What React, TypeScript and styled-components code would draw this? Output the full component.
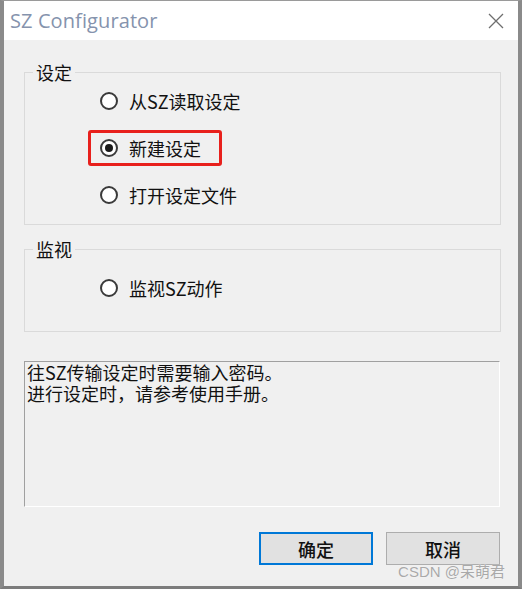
import React from "react";
import styled, { createGlobalStyle } from "styled-components";

const GlobalStyle = createGlobalStyle`
  html, body {
    margin: 0;
    padding: 0;
    background: #8a8a8a;
  }
  body {
    font-family: "Noto Sans CJK SC", "Noto Sans", sans-serif;
  }
`;

const Window = styled.div`
  position: relative;
  width: 522px;
  height: 589px;
  box-sizing: border-box;
  border-left: 4px solid #8a8a8a;
  border-right: 4px solid #8a8a8a;
  border-bottom: 3px solid #7c7c7c;
  border-top: 1px solid #9a9a9a;
  background: #f0f0f0;
  display: flex;
  flex-direction: column;
`;

const TitleBar = styled.div`
  height: 39px;
  background: #ffffff;
  display: flex;
  align-items: center;
  justify-content: space-between;
  padding: 0 14px 0 6px;
  flex-shrink: 0;
`;

const Title = styled.span`
  font-family: "Open Sans", "Noto Sans", sans-serif;
  font-size: 20px;
  color: #8593ad;
  letter-spacing: 0.1px;
`;

const CloseIcon = () => (
  <svg width="16" height="16" viewBox="0 0 16 16">
    <path d="M1 1 L15 15 M15 1 L1 15" stroke="#6e6e6e" strokeWidth="1.3" fill="none" />
  </svg>
);

const Client = styled.div`
  flex: 1;
  display: flex;
  flex-direction: column;
  padding: 22px 17px 0 20px;
`;

const Group = styled.fieldset<{ $pt: number; $pb: number; $mt?: number }>`
  margin: ${(p) => p.$mt ?? 0}px 0 0 0;
  padding: ${(p) => p.$pt}px 0 ${(p) => p.$pb}px 0;
  border: 1px solid #dadada;
  display: flex;
  flex-direction: column;
  gap: 11px;
  min-width: 0;
`;

const Legend = styled.legend`
  font-size: 18px;
  line-height: 20px;
  color: #111;
  margin-left: 8px;
  padding: 0 3px;
`;

const Row = styled.label<{ $marked?: boolean }>`
  align-self: flex-start;
  display: inline-flex;
  align-items: center;
  gap: 11px;
  height: 36px;
  box-sizing: border-box;
  margin-left: 63px;
  padding: 0 18px 0 9px;
  border: 3px solid ${(p) => (p.$marked ? "#e8201c" : "transparent")};
  border-radius: 3px;
  font-size: 18px;
  color: #111;
`;

const Circle = styled.span<{ $on?: boolean }>`
  width: 18px;
  height: 18px;
  box-sizing: border-box;
  border-radius: 50%;
  border: 2px solid #3a3a3a;
  background: #fff;
  display: flex;
  align-items: center;
  justify-content: center;
  &::after {
    content: "";
    width: 8px;
    height: 8px;
    border-radius: 50%;
    background: ${(p) => (p.$on ? "#1a1a1a" : "transparent")};
  }
`;

const Radio = ({ label, on, marked }: { label: string; on?: boolean; marked?: boolean }) => (
  <Row $marked={marked}>
    <Circle $on={on} />
    <span>{label}</span>
  </Row>
);

const InfoBox = styled.div`
  margin-top: 29px;
  margin-right: 1px;
  height: 146px;
  box-sizing: border-box;
  border-top: 1px solid #a0a0a0;
  border-left: 1px solid #a0a0a0;
  border-right: 1px solid #ffffff;
  border-bottom: 1px solid #ffffff;
  padding: 0 0 0 2px;
  font-size: 18px;
  line-height: 21px;
  color: #111;
`;

const ButtonRow = styled.div`
  margin-top: 25px;
  display: flex;
  justify-content: flex-end;
  gap: 13px;
  padding-right: 1px;
`;

const Button = styled.button<{ $def?: boolean }>`
  width: 114px;
  height: 33px;
  box-sizing: border-box;
  background: #e1e1e1;
  border: ${(p) => (p.$def ? "2px solid #0078d7" : "1px solid #adadad")};
  font-family: "Noto Sans CJK SC", "Noto Sans", sans-serif;
  font-size: 18px;
  font-weight: 500;
  color: #111;
  padding: 0;
`;

const Watermark = styled.span`
  position: absolute;
  right: 13px;
  bottom: 5px;
  font-family: "Liberation Sans", "Noto Sans CJK SC", sans-serif;
  font-size: 15px;
  color: #a9a9a9;
  text-shadow: 0 0 1px #fff;
`;

export default function App() {
  return (
    <>
      <GlobalStyle />
      <Window>
        <TitleBar>
          <Title>SZ Configurator</Title>
          <CloseIcon />
        </TitleBar>
        <Client>
          <Group $pt={1} $pb={11}>
            <Legend>设定</Legend>
            <Radio label="从SZ读取设定" />
            <Radio label="新建设定" on marked />
            <Radio label="打开设定文件" />
          </Group>
          <Group $pt={11} $pb={25} $mt={14}>
            <Legend>监视</Legend>
            <Radio label="监视SZ动作" />
          </Group>
          <InfoBox>
            往SZ传输设定时需要输入密码。
            <br />
            进行设定时，请参考使用手册。
          </InfoBox>
          <ButtonRow>
            <Button $def>确定</Button>
            <Button>取消</Button>
          </ButtonRow>
        </Client>
        <Watermark>CSDN @呆萌君</Watermark>
      </Window>
    </>
  );
}
